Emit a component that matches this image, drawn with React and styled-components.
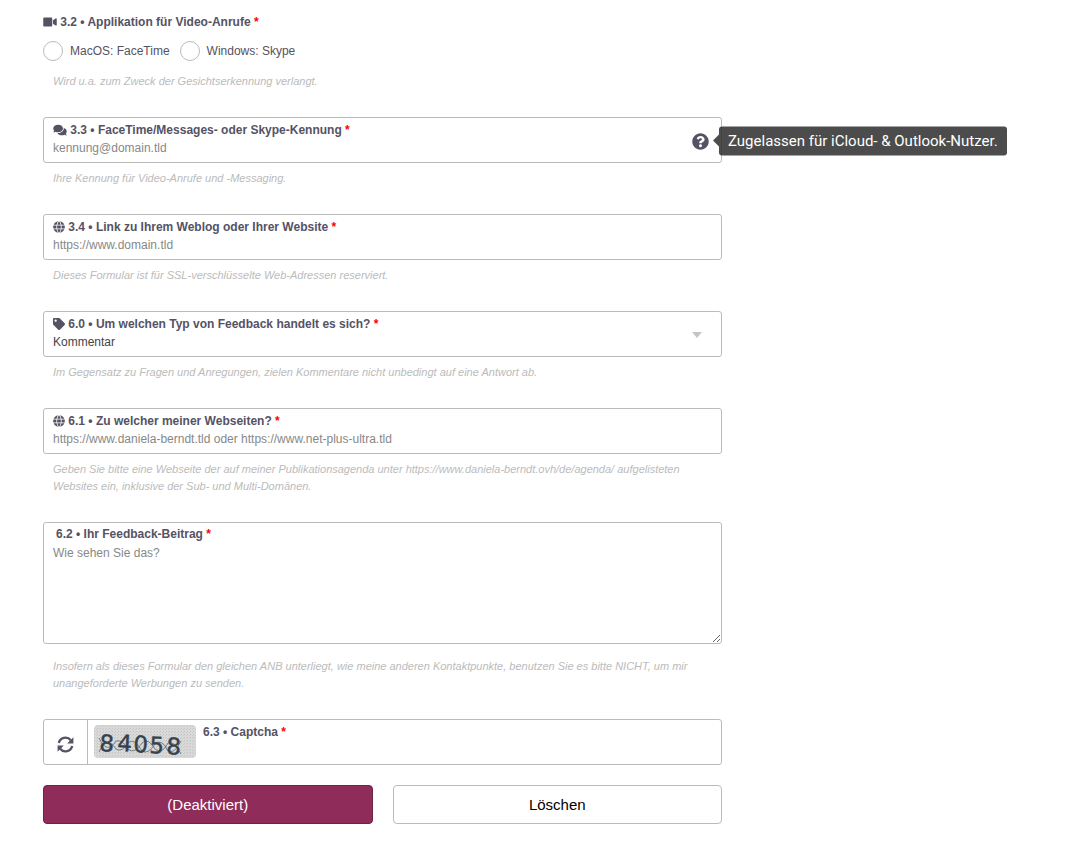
import React from "react";
import styled, { createGlobalStyle, css } from "styled-components";
import { FaVideo, FaComments, FaTag, FaQuestionCircle } from "react-icons/fa";

const GlobalStyle = createGlobalStyle`
  * {
    box-sizing: border-box;
  }

  body {
    margin: 0;
    background: #fff;
    color: #555264;
    font-family: "Liberation Sans", Arial, Helvetica, sans-serif;
    font-size: 12px;
    line-height: 18px;
  }

  input, select, textarea, button {
    font-family: inherit;
  }
`;

const Form = styled.form`
  width: 100%;
  max-width: 765px;
  padding: 13px 43px 18px;
`;

const Group = styled.div`
  margin-bottom: 27px;
`;

const RadioGroup = styled.fieldset`
  margin: 0 0 27px;
  padding: 0;
  border: 0;
`;

const labelText = css`
  display: block;
  padding: 0;
  font-size: 12px;
  font-weight: bold;
  line-height: 18px;

  svg {
    width: ${({ $wide }) => ($wide ? 14 : 12)}px;
    height: 12px;
    vertical-align: -2px;
  }
`;

const Legend = styled.legend`
  ${labelText}
`;

const Label = styled.label`
  ${labelText}
`;

const Star = styled.span`
  color: #f00;
`;

const Options = styled.div`
  display: flex;
  flex-wrap: wrap;
  gap: 10px;
  margin-top: 10px;
`;

const Option = styled.label`
  display: flex;
  align-items: center;
  gap: 7px;
`;

const Radio = styled.input`
  appearance: none;
  width: 20px;
  height: 20px;
  margin: 0;
  border: 1px solid #bbb;
  border-radius: 50%;
  background: #fff;

  &:checked {
    border: 6px solid #8f2c5a;
  }
`;

const Box = styled.div`
  display: flex;
  align-items: center;
  border: 1px solid #bbb;
  border-radius: 3px;
  background: #fff;
`;

const Main = styled.div`
  flex: 1;
  min-width: 0;
  padding: 3px 9px 5px ${({ $inset }) => $inset || 9}px;
`;

const control = css`
  display: block;
  width: 100%;
  margin: 0;
  border: 0;
  outline: 0;
  background: transparent;
  color: #444;
  font-size: 12px;
  line-height: 18px;

  &::placeholder {
    color: #888;
    opacity: 1;
  }
`;

const Input = styled.input`
  ${control}
  height: 18px;
  padding: 0;
`;

const Select = styled.select`
  ${control}
  appearance: none;
  height: 18px;
  padding: 0;
`;

const Arrow = styled.span`
  margin: 2px 19px 0 0;
  border: 5px solid transparent;
  border-top: 6px solid #c4c4c4;
  border-bottom: 0;
`;

const AreaBox = styled.div`
  border: 1px solid #bbb;
  border-radius: 3px;
  padding-top: 2px;

  label {
    padding-left: 12px;
  }
`;

const TextArea = styled.textarea`
  ${control}
  height: 100px;
  padding: 1px 9px;
  resize: vertical;
`;

const Help = styled.p`
  margin: ${({ $top }) => $top || 7}px 0 0;
  padding: 0 10px;
  color: #bbb;
  font-size: 11px;
  font-style: italic;
  line-height: 17px;
`;

const Hint = styled.span`
  position: relative;
  display: flex;
  margin: 2px 12px 0 0;
  font-size: 17px;
`;

const Tooltip = styled.span`
  position: absolute;
  top: 50%;
  left: 100%;
  z-index: 1;
  margin-left: 10px;
  padding: 4px 9px 5px;
  border-radius: 3px;
  transform: translateY(-50%);
  background: rgba(51, 51, 51, 0.88);
  color: #fff;
  font-family: Roboto, sans-serif;
  font-size: 15px;
  line-height: 20px;
  white-space: nowrap;

  &::before {
    content: "";
    position: absolute;
    top: 8px;
    right: 100%;
    border: 6px solid transparent;
    border-right-color: rgba(51, 51, 51, 0.88);
    border-left: 0;
  }
`;

const Reload = styled.button`
  display: flex;
  align-items: center;
  justify-content: center;
  width: 44px;
  height: 44px;
  padding: 4px 0 0;
  border: 0;
  border-right: 1px solid #bbb;
  background: none;
  color: #555264;
  cursor: pointer;

  svg {
    width: 17px;
    height: 17px;
  }
`;

const CaptchaImage = styled.svg`
  width: 102px;
  height: 33px;
  margin: 0 0 1px 6px;
  overflow: visible;
`;

const Actions = styled.div`
  display: grid;
  grid-template-columns: 1fr 1fr;
  gap: 20px;
  margin-top: 20px;
`;

const Button = styled.button`
  height: 39px;
  padding: 0;
  border: 1px solid ${({ $primary }) => ($primary ? "#6f2246" : "#bbb")};
  border-radius: 4px;
  background: ${({ $primary }) => ($primary ? "#8f2c5a" : "#fff")};
  color: ${({ $primary }) => ($primary ? "#fff" : "#000")};
  font-size: 15px;
  cursor: pointer;
`;

const Required = () => <Star>*</Star>;

const GlobeIcon = () => (
  <svg viewBox="0 0 512 512" fill="currentColor" aria-hidden="true">
    <path d="M364.215 192h131.43c5.439 20.419 8.354 41.905 8.354 64s-2.915 43.581-8.354 64h-131.43c5.154-43.049 4.939-86.746 0-128zM185.214 352c10.678 53.68 33.173 112.514 70.125 151.992.221.001.44.008.661.008s.44-.008.661-.008c37.012-39.543 59.467-98.414 70.125-151.992H185.214zm174.13-192h125.385C452.802 84.024 384.128 27.305 300.95 12.075c30.238 43.12 48.821 96.332 58.394 147.925zm-27.35 32H180.006c-5.339 41.914-5.345 86.037 0 128h151.989c5.339-41.915 5.345-86.037-.001-128zM152.656 352H27.271c31.926 75.976 100.6 132.695 183.778 147.925-30.246-43.136-48.823-96.35-58.393-147.925zm206.688 0c-9.575 51.605-28.163 104.814-58.394 147.925 83.178-15.23 151.852-71.949 183.778-147.925H359.344zm-32.558-192c-10.678-53.68-33.174-112.514-70.125-151.992-.221 0-.44-.008-.661-.008s-.44.008-.661.008C218.327 47.551 195.872 106.422 185.214 160h141.572zM16.355 192C10.915 212.419 8 233.905 8 256s2.915 43.581 8.355 64h131.43c-4.939-41.254-5.154-84.951 0-128H16.355zm136.301-32c9.575-51.602 28.161-104.81 58.394-147.925C127.872 27.305 59.198 84.024 27.271 160h125.385z" />
  </svg>
);

const RefreshIcon = () => (
  <svg viewBox="0 0 17 17" aria-hidden="true">
    <g fill="none" stroke="currentColor" strokeWidth="2.3">
      <path d="M1.8 7 A6.8 6.8 0 0 1 13.8 4.3" />
      <path d="M15.2 10 A6.8 6.8 0 0 1 3.2 12.7" />
    </g>
    <path fill="currentColor" d="M16.4 1.2V7.4H10.2Z M0.6 15.8V9.6H6.8Z" />
  </svg>
);

const TextField = ({ id, icon, wide, label, placeholder, help, children }) => (
  <Group>
    <Box>
      <Main>
        <Label htmlFor={id} $wide={wide}>
          {icon} {label} <Required />
        </Label>
        <Input id={id} name={id} type="text" placeholder={placeholder} />
      </Main>
      {children}
    </Box>
    <Help>{help}</Help>
  </Group>
);

const Captcha = () => (
  <CaptchaImage viewBox="0 0 102 33" role="img" aria-label="Captcha">
    <defs>
      <pattern id="grain" width="3" height="3" patternUnits="userSpaceOnUse">
        <rect width="3" height="3" fill="#d9d9d9" />
        <rect width="1" height="1" fill="#c4c4c4" />
        <rect x="2" y="1" width="1" height="1" fill="#cacaca" />
      </pattern>
    </defs>
    <rect width="102" height="33" rx="4" fill="url(#grain)" />
    <g
      fill="#34424f"
      stroke="#34424f"
      strokeWidth="0.4"
      fontFamily="DejaVu Sans, sans-serif"
      fontSize="23"
    >
      <text x="5" y="26" rotate="3">8</text>
      <text x="23" y="26" rotate="3">4</text>
      <text x="39" y="27" rotate="3">0</text>
      <text x="55" y="28" rotate="3">5</text>
      <text x="72" y="29" rotate="3">8</text>
    </g>
    <g fill="none" stroke="#34424f" strokeWidth="0.6">
      <path d="M5 13 Q13 30 22 16 Q28 14 34 24 Q40 30 48 18 Q54 12 61 24 Q68 30 74 18 Q80 15 87 29" />
      <path d="M5 27 Q13 10 22 24 Q28 28 34 18 Q40 12 48 26 Q54 30 61 19 Q68 13 74 26 Q80 30 87 16" />
    </g>
  </CaptchaImage>
);

const App = () => {
  return (
    <>
      <GlobalStyle />
      <Form onSubmit={(e) => e.preventDefault()}>
        <RadioGroup>
          <Legend $wide>
            <FaVideo /> 3.2 • Applikation für Video-Anrufe <Required />
          </Legend>
          <Options>
            <Option>
              <Radio type="radio" name="app" value="facetime" />
              MacOS: FaceTime
            </Option>
            <Option>
              <Radio type="radio" name="app" value="skype" />
              Windows: Skype
            </Option>
          </Options>
          <Help $top={12}>
            Wird u.a. zum Zweck der Gesichtserkennung verlangt.
          </Help>
        </RadioGroup>

        <TextField
          id="kennung"
          icon={<FaComments />}
          wide
          label="3.3 • FaceTime/Messages- oder Skype-Kennung"
          placeholder="kennung@domain.tld"
          help="Ihre Kennung für Video-Anrufe und -Messaging."
        >
          <Hint>
            <FaQuestionCircle />
            <Tooltip role="tooltip">
              Zugelassen für iCloud- &amp; Outlook-Nutzer.
            </Tooltip>
          </Hint>
        </TextField>

        <TextField
          id="website"
          icon={<GlobeIcon />}
          label="3.4 • Link zu Ihrem Weblog oder Ihrer Website"
          placeholder="https://www.domain.tld"
          help="Dieses Formular ist für SSL-verschlüsselte Web-Adressen reserviert."
        />

        <Group>
          <Box>
            <Main>
              <Label htmlFor="typ">
                <FaTag /> 6.0 • Um welchen Typ von Feedback handelt es sich?{" "}
                <Required />
              </Label>
              <Select id="typ" name="typ" defaultValue="Kommentar">
                <option>Kommentar</option>
                <option>Frage</option>
                <option>Anregung</option>
              </Select>
            </Main>
            <Arrow />
          </Box>
          <Help>
            Im Gegensatz zu Fragen und Anregungen, zielen Kommentare nicht
            unbedingt auf eine Antwort ab.
          </Help>
        </Group>

        <TextField
          id="webseite"
          icon={<GlobeIcon />}
          label="6.1 • Zu welcher meiner Webseiten?"
          placeholder="https://www.daniela-berndt.tld oder https://www.net-plus-ultra.tld"
          help="Geben Sie bitte eine Webseite der auf meiner Publikationsagenda unter https://www.daniela-berndt.ovh/de/agenda/ aufgelisteten Websites ein, inklusive der Sub- und Multi-Domänen."
        />

        <Group>
          <AreaBox>
            <Label htmlFor="beitrag">
              6.2 • Ihr Feedback-Beitrag <Required />
            </Label>
            <TextArea id="beitrag" name="beitrag" placeholder="Wie sehen Sie das?" />
          </AreaBox>
          <Help $top={14}>
            Insofern als dieses Formular den gleichen ANB unterliegt, wie meine
            anderen Kontaktpunkte, benutzen Sie es bitte NICHT, um mir
            unangeforderte Werbungen zu senden.
          </Help>
        </Group>

        <Box>
          <Reload type="button" aria-label="Captcha neu laden">
            <RefreshIcon />
          </Reload>
          <Captcha />
          <Main $inset={7}>
            <Label htmlFor="captcha">
              6.3 • Captcha <Required />
            </Label>
            <Input id="captcha" name="captcha" type="text" autoComplete="off" />
          </Main>
        </Box>

        <Actions>
          <Button type="submit" $primary>
            (Deaktiviert)
          </Button>
          <Button type="reset">Löschen</Button>
        </Actions>
      </Form>
    </>
  );
};

export default App;
